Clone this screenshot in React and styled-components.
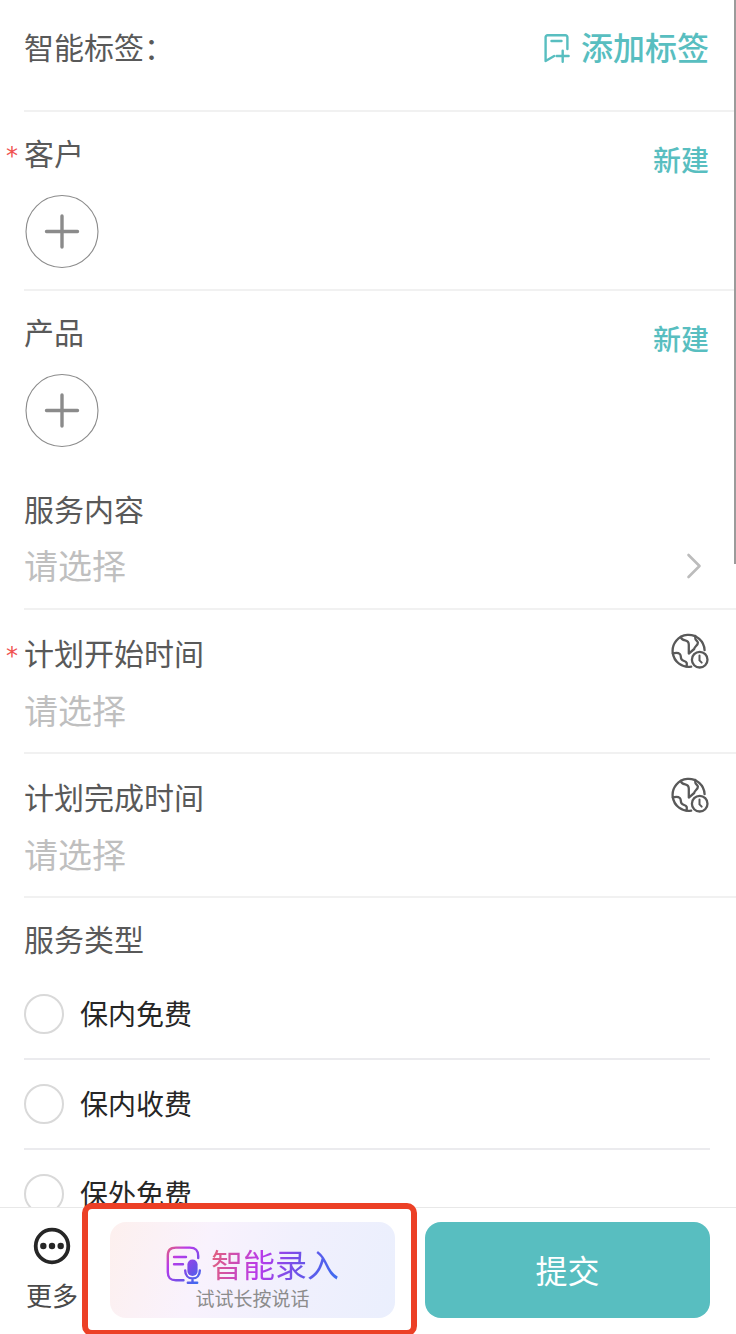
import React from 'react';
import styled, { createGlobalStyle } from 'styled-components';

const types = ['保内免费', '保内收费', '保外免费'];

const TagIcon = () => (
  <svg width="28" height="30" viewBox="0 0 28 30" fill="none" stroke="currentColor" strokeWidth="2.4" strokeLinecap="round" strokeLinejoin="round" aria-hidden="true">
    <path d="M24.4 16V4.2a2 2 0 0 0-2-2H4.6a2 2 0 0 0-2 2V28l8.6-5" />
    <path d="M8.5 8h10M13.6 23h12M19.7 17.6v11.2" />
  </svg>
);

const PlusIcon = () => (
  <svg width="76" height="76" viewBox="0 0 76 76" fill="none" stroke="#8b8b8b" aria-hidden="true">
    <circle cx="38" cy="37.5" r="36" strokeWidth="1.1" />
    <path d="M22.5 37.5h31M38 22v31" strokeWidth="3.4" strokeLinecap="round" />
  </svg>
);

const ArrowIcon = () => (
  <svg width="16" height="26" viewBox="0 0 16 26" fill="none" stroke="#bcbcbc" strokeWidth="2.6" strokeLinecap="round" strokeLinejoin="round" aria-hidden="true">
    <path d="M2.5 2l11 11-11 11" />
  </svg>
);

const ZoneIcon = () => (
  <svg width="38" height="36" viewBox="0 0 38 36" fill="none" stroke="#595959" strokeWidth="2.3" strokeLinecap="round" strokeLinejoin="round" aria-hidden="true">
    <path d="M33.6 17.2A16 16 0 1 0 20.2 33.6" />
    <path d="M9.8 4c.4 2.4 2 3 4.4 3.400 2.800.5 3.600 1.600 3.600 4.400v8.800l5.400-4.600c.2-2.600 3.900-3.600 3.700-6.400-.2-2-2.600-2.200-2.600-4.400V2.800" />
    <path d="M1.8 20.400c2.600-.6 5.200-1 7 .6 1.600 1.600.6 3.400 1.600 5.200 1.200 2 4.400 1.600 5.200 3.600.5 1.300.1 2.400 0 3.600" />
    <circle cx="28.7" cy="26.7" r="7.8" />
    <path d="M28.5 22.600v4.800l2.200 2.200" strokeWidth="2" />
  </svg>
);

const MoreIcon = () => (
  <svg width="38" height="38" viewBox="0 0 38 38" aria-hidden="true">
    <circle cx="19" cy="19" r="16.3" fill="none" stroke="#262626" strokeWidth="3.8" />
    <g fill="#262626">
      <circle cx="10.3" cy="19" r="3.2" />
      <circle cx="19" cy="19" r="3.2" />
      <circle cx="27.7" cy="19" r="3.2" />
    </g>
  </svg>
);

const VoiceIcon = () => (
  <svg width="36" height="38" viewBox="0 0 36 38" fill="none" strokeLinecap="round" aria-hidden="true">
    <defs>
      <linearGradient id="voice" gradientUnits="userSpaceOnUse" x1="0" y1="2" x2="34" y2="36">
        <stop offset="0" stopColor="#e2607c" />
        <stop offset="0.3" stopColor="#b93aea" />
        <stop offset="0.7" stopColor="#7050e8" />
        <stop offset="1" stopColor="#3c6cf0" />
      </linearGradient>
    </defs>
    <g stroke="url(#voice)" strokeWidth="2.4">
      <path d="M32.2 12V10c0-6-2.400-8.400-8.400-8.400H10C4 1.600 1.800 4 1.800 10v16c0 6 2.200 8.200 8.200 8.200h7.500" />
      <path d="M8 11h12M8 18.200h9" />
      <path d="M19.2 24.400c0 5 3 8 7.300 8s7.300-3 7.300-8M26.500 32.400v4M21.800 36.700h9.400" />
    </g>
    <rect x="21.4" y="13.4" width="10.2" height="16.6" rx="5.1" fill="url(#voice)" />
  </svg>
);

const TimeField = ({ id, label, required }) => (
  <Section $top={22} $bottom={19}>
    <Heading>
      <Label htmlFor={id}>
        {required && <Star>*</Star>}
        {label}
      </Label>
      <IconButton type="button" aria-label="时区"><ZoneIcon /></IconButton>
    </Heading>
    <Field>
      <TextInput id={id} placeholder="请选择" readOnly />
    </Field>
  </Section>
);

const PickField = ({ label, required, last }) => (
  <Section $top={20} $bottom={19} $plain={last}>
    <PickHeading>
      <Label as="h2">
        {required && <Star>*</Star>}
        {label}
      </Label>
      <TextButton type="button">新建</TextButton>
    </PickHeading>
    <AddButton type="button" aria-label={`添加${label}`}><PlusIcon /></AddButton>
  </Section>
);

export default function App() {
  return (
    <Page>
      <GlobalStyle />
      <Form>
        <TagRow>
          <Label as="h2">智能标签：</Label>
          <TagButton type="button"><TagIcon /><span>添加标签</span></TagButton>
        </TagRow>
        <PickField label="客户" required />
        <PickField label="产品" last />
        <Section $top={20} $bottom={19}>
          <Heading>
            <Label htmlFor="content">服务内容</Label>
          </Heading>
          <Field>
            <Select id="content" defaultValue="">
              <option value="">请选择</option>
            </Select>
            <ArrowIcon />
          </Field>
        </Section>
        <TimeField id="start" label="计划开始时间" required />
        <TimeField id="finish" label="计划完成时间" />
        <Types>
          <Label as="legend">服务类型</Label>
          <Options>
            {types.map((type) => (
              <Option key={type}>
                <Radio type="radio" name="type" value={type} />
                <span>{type}</span>
              </Option>
            ))}
          </Options>
        </Types>
        <ScrollThumb />
      </Form>
      <Footer>
        <MoreButton type="button"><MoreIcon />更多</MoreButton>
        <VoiceWrapper>
          <VoiceButton type="button">
            <VoiceTitle><VoiceIcon /><span>智能录入</span></VoiceTitle>
            <VoiceHint>试试长按说话</VoiceHint>
          </VoiceButton>
          <Highlight />
        </VoiceWrapper>
        <Submit type="button">提交</Submit>
      </Footer>
    </Page>
  );
}

const GlobalStyle = createGlobalStyle`
  * {
    box-sizing: border-box;
  }
  body {
    margin: 0;
    background: #fff;
  }
  body, button, input, select {
    font-family: "Noto Sans CJK SC", sans-serif;
  }
  button {
    padding: 0;
    border: 0;
    background: none;
    cursor: pointer;
  }
  svg {
    display: block;
    flex: none;
  }
`;

const Page = styled.div`
  display: flex;
  flex-direction: column;
  height: 100vh;
  overflow: hidden;
`;

const Form = styled.main`
  position: relative;
  flex: 1;
  min-height: 0;
  overflow: hidden;
  padding-left: 24px;
`;

const Section = styled.section`
  padding: ${(p) => p.$top}px 27px ${(p) => p.$bottom}px 0;
  border-bottom: ${(p) => (p.$plain ? '0' : '2px solid #f1f1f1')};
`;

const TagRow = styled.section`
  display: flex;
  align-items: center;
  justify-content: space-between;
  padding: 24px 27px 38px 0;
  border-bottom: 2px solid #f1f1f1;
`;

const Heading = styled.div`
  display: flex;
  align-items: flex-start;
  justify-content: space-between;
`;

const PickHeading = styled(Heading)`
  height: 62px;
`;

const Label = styled.label`
  position: relative;
  margin: 0;
  padding: 0 0 4px;
  color: #595959;
  font-size: 30px;
  font-weight: 400;
  line-height: 40px;
`;

/* hangs in the gutter left of the label */
const Star = styled.span`
  position: absolute;
  left: -18px;
  top: 4px;
  color: #f0524f;
  font-family: "DejaVu Sans", sans-serif;
  font-size: 24px;
`;

const TextButton = styled.button`
  padding-top: 7px;
  color: #58bec0;
  font-size: 28px;
  font-weight: 500;
  line-height: 40px;
`;

const TagButton = styled.button`
  display: flex;
  align-items: center;
  gap: 10px;
  color: #58bec0;
  font-size: 32px;
  font-weight: 500;
  line-height: 44px;
  span {
    padding-bottom: 4px;
  }
`;

const IconButton = styled.button`
  padding-top: 1px;
`;

const AddButton = styled.button`
  display: block;
  border-radius: 50%;
`;

const Field = styled.div`
  display: flex;
  align-items: center;
  justify-content: space-between;
  height: 46px;
  margin-top: 11px;
  padding-right: 7px;
`;

const TextInput = styled.input`
  flex: 1;
  min-width: 0;
  height: 46px;
  padding: 0 0 2px;
  border: 0;
  outline: 0;
  background: none;
  font-size: 34px;
  &::placeholder {
    color: #bfbfbf;
  }
`;

const Select = styled.select`
  flex: 1;
  min-width: 0;
  height: 46px;
  padding: 0 0 2px;
  border: 0;
  appearance: none;
  background: none;
  color: #bfbfbf;
  font-size: 34px;
  line-height: 44px;
`;

const Types = styled.fieldset`
  min-width: 0;
  margin: 0;
  padding: 20px 26px 0 0;
  border: 0;
  legend {
    float: left;
    width: 100%;
  }
`;

const Options = styled.div`
  clear: both;
  padding-top: 8px;
`;

const Option = styled.label`
  display: flex;
  align-items: center;
  gap: 16px;
  height: 90px;
  border-bottom: 2px solid #ebebee;
  color: #262626;
  font-size: 28px;
  line-height: 40px;
  span {
    padding-bottom: 2px;
  }
`;

const Radio = styled.input`
  appearance: none;
  width: 40px;
  height: 40px;
  margin: 0;
  border: 2px solid #d9d9d9;
  border-radius: 50%;
  background: #fff;
  &:checked {
    border: 12px solid #58bec0;
  }
`;

const ScrollThumb = styled.div`
  position: absolute;
  top: 0;
  right: 0;
  width: 2px;
  height: 564px;
  background: #9b9b9b;
`;

const Footer = styled.footer`
  display: flex;
  gap: 30px;
  padding: 14px 26px 16px 24px;
  border-top: 1px solid #e8e8e8;
  background: #fff;
`;

const MoreButton = styled.button`
  display: flex;
  flex-direction: column;
  align-items: center;
  gap: 11px;
  width: 56px;
  padding-top: 5px;
  color: #4a4a4a;
  font-size: 26px;
  line-height: 38px;
`;

const VoiceWrapper = styled.div`
  position: relative;
  flex: 1;
`;

const VoiceButton = styled.button`
  display: flex;
  flex-direction: column;
  align-items: center;
  gap: 2px;
  width: 100%;
  height: 96px;
  padding-top: 24px;
  border-radius: 16px;
  background: linear-gradient(108deg, #fdf0ee 0%, #f9f2fd 33%, #f1f0fd 60%, #eaeffd 100%);
`;

const VoiceTitle = styled.span`
  display: flex;
  align-items: center;
  gap: 9px;
  font-size: 32px;
  line-height: 34px;
  span {
    padding-bottom: 4px;
    background: linear-gradient(105deg, #e2607c 2%, #b93aea 38%, #7050e8 66%, #3c6cf0 98%);
    background-clip: text;
    color: transparent;
  }
`;

const VoiceHint = styled.span`
  color: #8c8c8c;
  font-size: 19px;
  line-height: 24px;
`;

const Highlight = styled.div`
  position: absolute;
  inset: -19px -22px -18px -28px;
  border: 6px solid #ec4026;
  border-radius: 10px;
  pointer-events: none;
`;

const Submit = styled.button`
  flex: 1;
  height: 96px;
  padding-bottom: 2px;
  border-radius: 16px;
  background: #58bec0;
  color: #fff;
  font-size: 32px;
`;
